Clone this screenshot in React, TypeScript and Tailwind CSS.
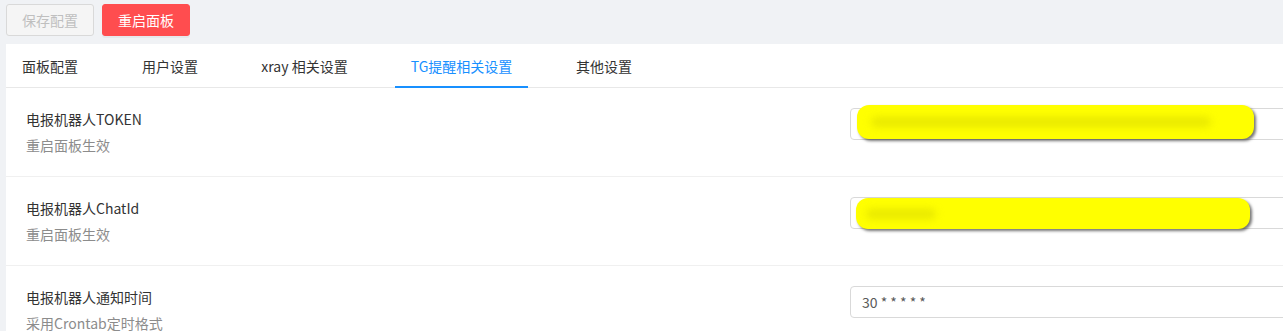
import React from "react";

const TABS: { label: string; w: string }[] = [
  { label: "面板配置", w: "w-[88px]" },
  { label: "用户设置", w: "w-[88px]" },
  { label: "xray 相关设置", w: "w-[117px]" },
  { label: "TG提醒相关设置", w: "w-[133px]" },
  { label: "其他设置", w: "w-[88px]" },
];
const ACTIVE = 3;

type Row = {
  title: string;
  desc: string;
  value?: string;
  blob?: { left: number; top: number; width: number; height: number; blurWidth: number; blurLeft: number };
};

const ROWS: Row[] = [
  {
    title: "电报机器人TOKEN",
    desc: "重启面板生效",
    blob: { left: 7, top: -3, width: 397, height: 34, blurWidth: 340, blurLeft: 14 },
  },
  {
    title: "电报机器人ChatId",
    desc: "重启面板生效",
    blob: { left: 6, top: 1, width: 394, height: 31, blurWidth: 70, blurLeft: 10 },
  },
  { title: "电报机器人通知时间", desc: "采用Crontab定时格式", value: "30 * * * * *" },
];

function SettingRow({ row }: { row: Row }) {
  return (
    <div className="flex border-b border-[#f0f0f0] px-5 py-5">
      <div className="w-[824px] shrink-0">
        <div className="text-[14px] leading-[22px] text-[#333333]">{row.title}</div>
        <div className="mt-1 text-[14px] leading-[22px] text-[#8c8c8c]">{row.desc}</div>
      </div>
      <div className="relative">
        <div className="h-8 w-[800px] rounded-[4px] border border-[#d9d9d9] bg-white px-[11px] text-[14px] leading-[30px] text-[#595959]">
          {row.value ?? ""}
        </div>
        {row.blob && (
          <div
            className="absolute overflow-hidden rounded-[12px] bg-[#ffff00] shadow-[2px_2px_3px_rgba(0,0,0,0.55)]"
            style={{ left: row.blob.left, top: row.blob.top, width: row.blob.width, height: row.blob.height }}
          >
            <div
              className="absolute top-1/2 h-[9px] -translate-y-1/2 rounded-full bg-[#d4d400] opacity-60 blur-[4px]"
              style={{ left: row.blob.blurLeft, width: row.blob.blurWidth }}
            />
          </div>
        )}
      </div>
    </div>
  );
}

export default function App() {
  return (
    <div className="h-[331px] w-[1283px] overflow-hidden bg-[#f0f2f5] font-['Noto_Sans_CJK_SC','Noto_Sans',sans-serif]">
      <div className="flex gap-2 px-[6px] pt-1 pb-2">
        <button className="h-8 rounded-[3px] border border-[#d9d9d9] bg-[#f5f5f5] px-[15px] text-[14px] text-[#bfbfbf]">
          保存配置
        </button>
        <button className="h-8 rounded-[3px] border border-[#ff4d4f] bg-[#ff4d4f] px-[15px] text-[14px] text-white shadow-[0_2px_0_rgba(0,0,0,0.04)]">
          重启面板
        </button>
      </div>
      <div className="ml-[6px] w-[1700px] bg-white">
        <div className="flex border-b border-[#e8e8e8]">
          {TABS.map((t, i) => (
            <div
              key={t.label}
              className={
                "relative flex h-[43px] items-center justify-center pt-[2px] text-[14px] whitespace-nowrap " +
                t.w +
                (i > 0 ? " ml-8" : "") +
                (i === ACTIVE ? " text-[#1890ff]" : " text-[#333333]")
              }
            >
              {t.label}
              {i === ACTIVE && <div className="absolute bottom-[-1px] left-0 h-[2px] w-full bg-[#1890ff]" />}
            </div>
          ))}
        </div>
        {ROWS.map((r) => (
          <SettingRow key={r.title} row={r} />
        ))}
      </div>
    </div>
  );
}
